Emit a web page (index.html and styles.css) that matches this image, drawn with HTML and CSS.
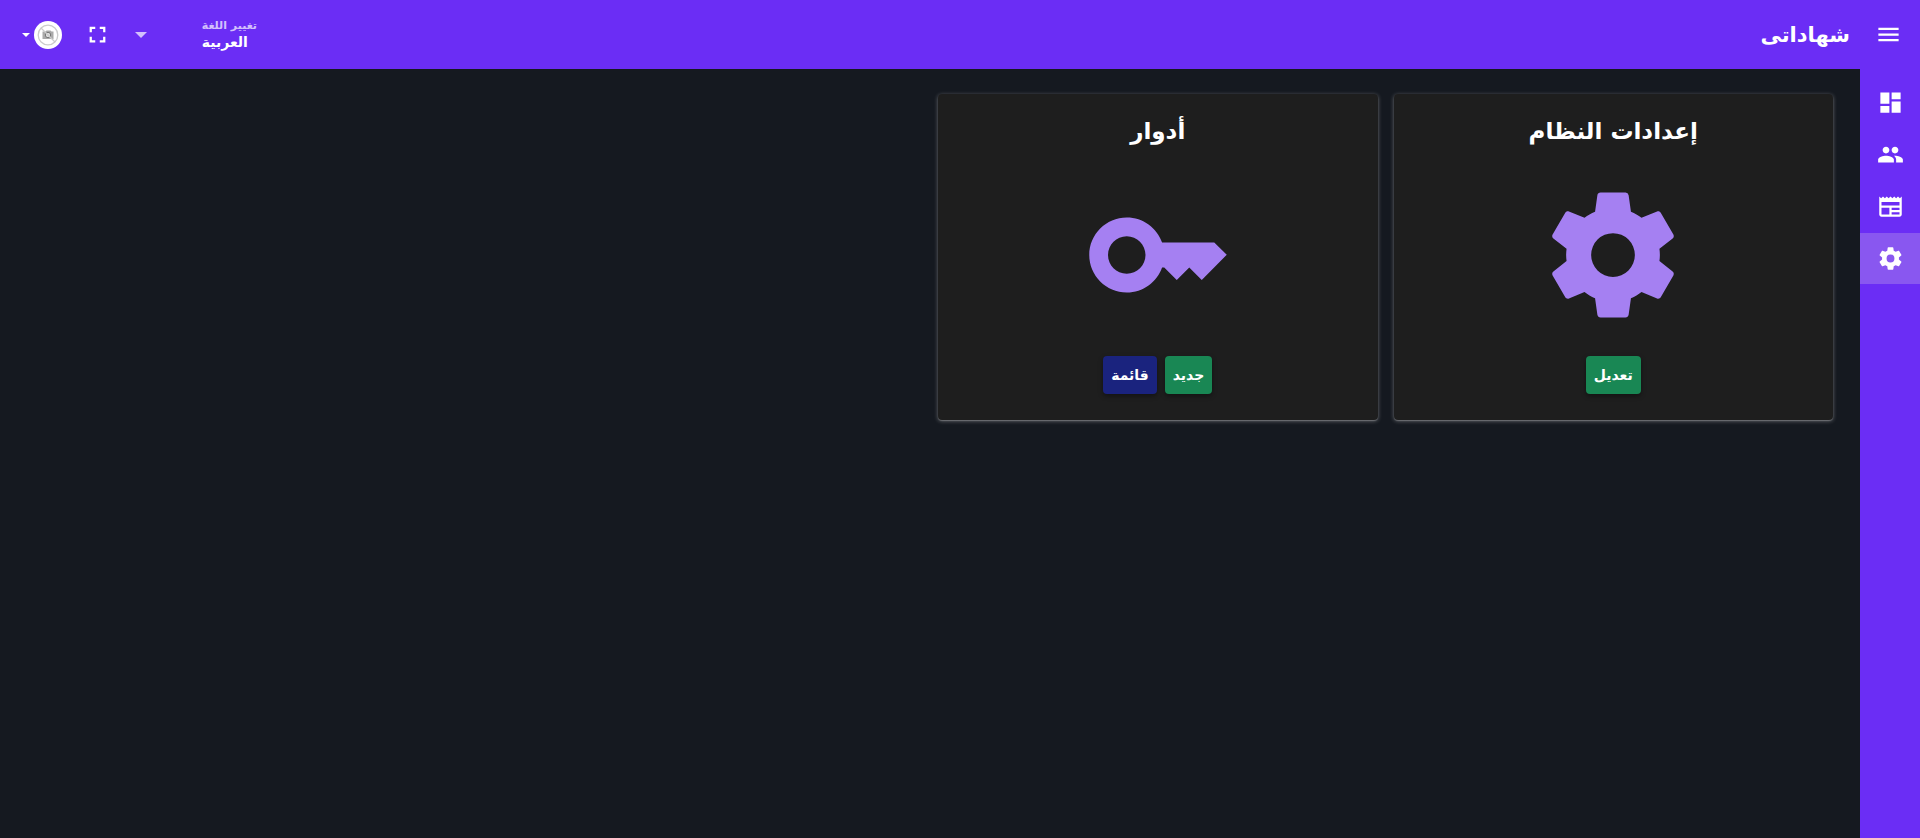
FILE: index.html
```html
<!DOCTYPE html>
<html lang="ar" dir="rtl">
<head>
<meta charset="utf-8">
<title>شهاداتى</title>
<link rel="stylesheet" href="styles.css">
</head>
<body class="app">
<header class="topbar">
  <button class="icon-button" type="button" aria-label="القائمة">
    <svg class="icon" viewBox="0 0 24 24"><path d="M3 18h18v-2H3v2zm0-5h18v-2H3v2zm0-7v2h18V6H3z"/></svg>
  </button>
  <h1 class="brand">شهاداتى</h1>
  <div class="tools">
    <button class="language" type="button">
      <span class="language-text">
        <span class="language-label">تغيير اللغة</span>
        <span class="language-value">العربية</span>
      </span>
      <svg class="language-arrow" viewBox="0 0 12 6"><path d="M0 0h12L6 6z"/></svg>
    </button>
    <button class="icon-button" type="button" aria-label="ملء الشاشة">
      <svg class="icon" viewBox="0 0 24 24"><path d="M7 14H5v5h5v-2H7v-3zm-2-4h2V7h3V5H5v5zm12 7h-3v2h5v-5h-2v3zM14 5v2h3v3h2V5h-5z"/></svg>
    </button>
    <button class="account" type="button" aria-label="الحساب">
      <svg class="avatar" viewBox="0 0 28 28">
        <circle cx="14" cy="14" r="14" fill="#fff"/>
        <path d="M8.500 10.500h3l1-1h4l1 1h2v7.500h-11z" fill="#aaa"/>
        <circle cx="14" cy="14" r="2.700" fill="#ddd" stroke="#777"/>
        <circle cx="14" cy="14" r="9.800" fill="none" stroke="#ccc" stroke-width="1.300"/>
        <path d="M7 7l14 14" stroke="#ccc" stroke-width="1.300"/>
      </svg>
      <svg class="account-arrow" viewBox="0 0 8 4"><path d="M0 0h8L4 4z"/></svg>
    </button>
  </div>
</header>
<div class="body">
  <nav class="sidebar" aria-label="التنقل">
    <a class="nav-link" href="#dashboard" aria-label="لوحة التحكم"><svg class="icon" viewBox="0 0 24 24"><path d="M3 13h8V3H3v10zm0 8h8v-6H3v6zm10 0h8V11h-8v10zm0-18v6h8V3h-8z"/></svg></a>
    <a class="nav-link" href="#users" aria-label="المستخدمون"><svg class="icon" viewBox="0 0 24 24"><path d="M16 11c1.660 0 2.990-1.340 2.990-3S17.660 5 16 5s-3 1.340-3 3 1.340 3 3 3zm-8 0c1.660 0 2.990-1.340 2.990-3S9.660 5 8 5 5 6.340 5 8s1.340 3 3 3zm0 2c-2.330 0-7 1.170-7 3.500V19h14v-2.500c0-2.330-4.670-3.500-7-3.500zm8 0c-.29 0-.62.02-.97.05 1.160.84 1.970 1.970 1.970 3.450V19h6v-2.500c0-2.330-4.670-3.500-7-3.500z"/></svg></a>
    <a class="nav-link" href="#news" aria-label="الشهادات"><svg class="icon" viewBox="0 0 24 24"><path fill-rule="evenodd" d="M22 3l-1.670 1.670L18.670 3 17 4.670 15.330 3l-1.660 1.670L12 3l-1.670 1.670L8.670 3 7 4.670 5.330 3 3.670 4.670 2 3v16c0 1.100.9 2 2 2h16c1.100 0 2-.9 2-2V3zM11 19H4v-6h7v6zm9 0h-7v-2h7v2zm0-4h-7v-2h7v2zm0-4H4V8h16v3z"/></svg></a>
    <a class="nav-link nav-link-active" href="#settings" aria-label="الإعدادات" aria-current="page"><svg class="icon" viewBox="0 0 24 24"><use href="#cog"/></svg></a>
  </nav>
  <main class="cards">
    <article class="card">
      <h2 class="card-title">إعدادات النظام</h2>
      <svg class="card-icon" viewBox="0 0 24 24"><path id="cog" d="M12 15.500A3.500 3.500 0 0 1 8.500 12 3.500 3.500 0 0 1 12 8.500a3.500 3.500 0 0 1 3.500 3.500 3.500 3.500 0 0 1-3.500 3.500m7.430-2.530c.04-.32.07-.64.07-.97s-.03-.66-.07-1l2.110-1.630c.19-.15.24-.42.12-.64l-2-3.460c-.12-.22-.39-.31-.61-.22l-2.490 1c-.52-.39-1.060-.73-1.690-.98l-.37-2.650A.506.506 0 0 0 14 2h-4c-.25 0-.46.18-.5.42l-.37 2.650c-.63.25-1.170.59-1.690.98l-2.490-1c-.22-.09-.49 0-.61.22l-2 3.460c-.13.22-.07.49.12.64L4.570 11c-.04.34-.07.67-.07 1s.03.65.07.97l-2.110 1.660c-.19.15-.25.42-.12.64l2 3.460c.12.22.39.3.61.22l2.490-1.010c.52.4 1.060.74 1.690.99l.37 2.650c.04.24.25.42.5.42h4c.25 0 .46-.18.5-.42l.37-2.650c.63-.26 1.170-.59 1.690-.99l2.490 1.010c.22.08.49 0 .61-.22l2-3.460c.12-.22.07-.49-.12-.64z"/></svg>
      <div class="actions"><button class="button button-green" type="button">تعديل</button></div>
    </article>
    <article class="card">
      <h2 class="card-title">أدوار</h2>
      <svg class="card-icon" viewBox="0 0 24 24"><path d="M21 10h-8.350C11.830 7.670 9.610 6 7 6c-3.310 0-6 2.690-6 6s2.690 6 6 6c2.610 0 4.830-1.670 5.650-4H13l2 2 2-2 2 2 4-4.040L21 10zM7 15c-1.650 0-3-1.350-3-3s1.350-3 3-3 3 1.350 3 3-1.350 3-3 3z"/></svg>
      <div class="actions"><button class="button button-green" type="button">جديد</button><button class="button button-blue" type="button">قائمة</button></div>
    </article>
  </main>
</div>
</body>
</html>
```
FILE: styles.css
```css
* { box-sizing: border-box; }
.app {
  margin: 0;
  min-height: 100vh;
  display: flex;
  flex-direction: column;
  background: #151920;
  color: #fff;
  font-family: "DejaVu Sans", "Noto Sans", sans-serif;
}
button {
  font: inherit;
  color: inherit;
  border: 0;
  background: none;
  padding: 0;
  cursor: pointer;
}
svg { display: block; fill: currentColor; }
.icon { width: 27px; height: 27px; }
.topbar {
  display: flex;
  align-items: center;
  height: 69px;
  padding: 0 18px 0 22px;
  padding-inline: 18px 22px;
  background: #6b2df5;
}
.brand {
  margin: 0;
  margin-inline-start: 25px;
  font-size: 21px;
  line-height: 28px;
  font-weight: 700;
}
.tools {
  display: flex;
  align-items: center;
  margin-inline-start: auto;
}
.language {
  display: flex;
  align-items: center;
  justify-content: space-between;
  width: 122px;
  margin-inline-end: 24px;
}
.language-text {
  display: flex;
  flex-direction: column;
  text-align: end;
}
.language-label {
  font-size: 11px;
  line-height: 14px;
  font-weight: 700;
  opacity: .7;
}
.language-value {
  font-size: 14px;
  line-height: 18px;
  font-weight: 700;
}
.language-arrow { width: 12px; opacity: .7; }
.account {
  display: flex;
  align-items: center;
  gap: 4px;
  margin-inline-start: 22px;
}
.avatar { width: 28px; height: 28px; }
.account-arrow { width: 8px; }
.body { display: flex; flex: 1; }
.sidebar {
  display: flex;
  flex-direction: column;
  gap: 1px;
  width: 60px;
  padding-top: 8px;
  background: #6b2df5;
}
.nav-link {
  display: grid;
  place-items: center;
  height: 51px;
  color: #fff;
}
.nav-link-active { background: #8957f0; }
.cards {
  flex: 1;
  display: grid;
  grid-template-columns: repeat(4, 1fr);
  align-content: start;
  gap: 16px;
  padding: 25px 27px;
}
.card {
  display: flex;
  flex-direction: column;
  align-items: center;
  padding: 17px 16px 26px;
  border-radius: 4px;
  background: #1e1e1e;
  box-shadow: 0 1px 4px rgba(255, 255, 255, .35), 0 1px 1px rgba(255, 255, 255, .2);
}
.card-title {
  margin: 0;
  font-size: 23px;
  line-height: 40px;
  font-weight: 700;
}
.card-icon {
  width: 150px;
  height: 150px;
  margin: 29px 0 26px;
  color: #a580f2;
}
.actions { display: flex; gap: 8px; }
.button {
  height: 38px;
  padding: 0 8px;
  border-radius: 4px;
  font-size: 14px;
  font-weight: 700;
  box-shadow: 0 2px 5px rgba(0, 0, 0, .4);
}
.button-green { background: #198754; }
.button-blue { background: #1a237e; }
```
